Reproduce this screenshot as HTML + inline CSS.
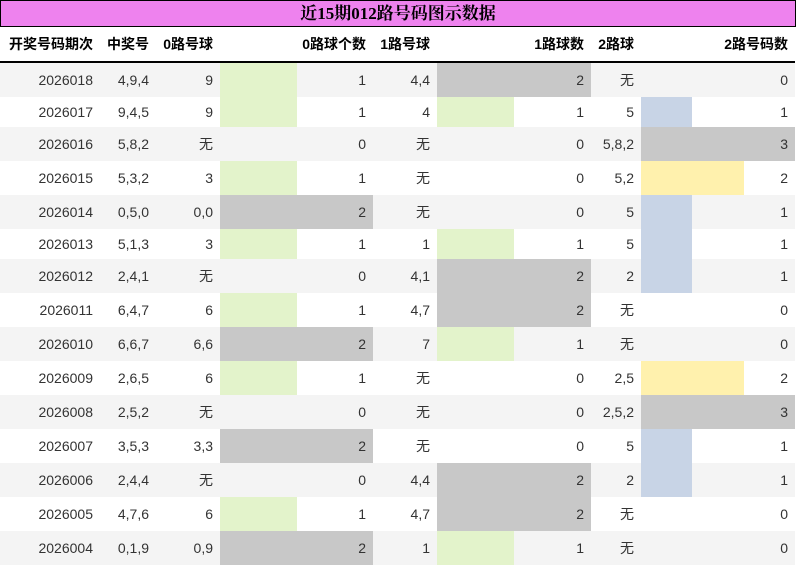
<!DOCTYPE html>
<html><head><meta charset="utf-8"><style>
body{margin:0;width:796px;height:566px;background:#fff;font-family:"Liberation Sans","Noto Sans CJK SC",sans-serif;overflow:hidden}
.title{position:absolute;left:0;top:0;width:794px;height:25px;background:#ee82ee;border:1px solid #000;text-align:center;font:bold 17px/25px "Liberation Serif","Noto Serif CJK SC",serif;color:#000}
table{position:absolute;left:0;top:27px;border-collapse:collapse;table-layout:fixed;width:795px}
td,th{padding:0 7px 0 0;text-align:right;font-size:14px;white-space:nowrap}
th{height:34px;font-weight:bold;color:#000;border-bottom:2px solid #000}
td{color:#333;height:34px}
tr.s td{height:30px}
tr.g td{background:#f4f4f4}
td.b{position:relative;padding:0}
td.b div{position:absolute;left:0;top:0;bottom:0}
td.b span{position:relative;display:block;padding-right:7px}
.G{background:#e3f3cb}.K{background:#c8c8c8}.B{background:#c8d4e6}.Y{background:#fff1ad}
</style></head><body>
<div class="title">近15期012路号码图示数据</div>
<table>
<colgroup><col style="width:100px"><col style="width:56px"><col style="width:64px"><col style="width:153px"><col style="width:64px"><col style="width:154px"><col style="width:50px"><col style="width:154px"></colgroup>
<tr><th>开奖号码期次</th><th>中奖号</th><th>0路号球</th><th>0路球个数</th><th>1路号球</th><th>1路球数</th><th>2路球</th><th>2路号码数</th></tr>
<tr class="g"><td>2026018</td><td>4,9,4</td><td>9</td><td class="b"><div class="G" style="width:50%"></div><span>1</span></td><td>4,4</td><td class="b"><div class="K" style="width:100%"></div><span>2</span></td><td>无</td><td class="b"><span>0</span></td></tr>
<tr class="s"><td>2026017</td><td>9,4,5</td><td>9</td><td class="b"><div class="G" style="width:50%"></div><span>1</span></td><td>4</td><td class="b"><div class="G" style="width:50%"></div><span>1</span></td><td>5</td><td class="b"><div class="B" style="width:33.3%"></div><span>1</span></td></tr>
<tr class="g"><td>2026016</td><td>5,8,2</td><td>无</td><td class="b"><span>0</span></td><td>无</td><td class="b"><span>0</span></td><td>5,8,2</td><td class="b"><div class="K" style="width:100%"></div><span>3</span></td></tr>
<tr><td>2026015</td><td>5,3,2</td><td>3</td><td class="b"><div class="G" style="width:50%"></div><span>1</span></td><td>无</td><td class="b"><span>0</span></td><td>5,2</td><td class="b"><div class="Y" style="width:66.6%"></div><span>2</span></td></tr>
<tr class="g"><td>2026014</td><td>0,5,0</td><td>0,0</td><td class="b"><div class="K" style="width:100%"></div><span>2</span></td><td>无</td><td class="b"><span>0</span></td><td>5</td><td class="b"><div class="B" style="width:33.3%"></div><span>1</span></td></tr>
<tr class="s"><td>2026013</td><td>5,1,3</td><td>3</td><td class="b"><div class="G" style="width:50%"></div><span>1</span></td><td>1</td><td class="b"><div class="G" style="width:50%"></div><span>1</span></td><td>5</td><td class="b"><div class="B" style="width:33.3%"></div><span>1</span></td></tr>
<tr class="g"><td>2026012</td><td>2,4,1</td><td>无</td><td class="b"><span>0</span></td><td>4,1</td><td class="b"><div class="K" style="width:100%"></div><span>2</span></td><td>2</td><td class="b"><div class="B" style="width:33.3%"></div><span>1</span></td></tr>
<tr><td>2026011</td><td>6,4,7</td><td>6</td><td class="b"><div class="G" style="width:50%"></div><span>1</span></td><td>4,7</td><td class="b"><div class="K" style="width:100%"></div><span>2</span></td><td>无</td><td class="b"><span>0</span></td></tr>
<tr class="g"><td>2026010</td><td>6,6,7</td><td>6,6</td><td class="b"><div class="K" style="width:100%"></div><span>2</span></td><td>7</td><td class="b"><div class="G" style="width:50%"></div><span>1</span></td><td>无</td><td class="b"><span>0</span></td></tr>
<tr><td>2026009</td><td>2,6,5</td><td>6</td><td class="b"><div class="G" style="width:50%"></div><span>1</span></td><td>无</td><td class="b"><span>0</span></td><td>2,5</td><td class="b"><div class="Y" style="width:66.6%"></div><span>2</span></td></tr>
<tr class="g"><td>2026008</td><td>2,5,2</td><td>无</td><td class="b"><span>0</span></td><td>无</td><td class="b"><span>0</span></td><td>2,5,2</td><td class="b"><div class="K" style="width:100%"></div><span>3</span></td></tr>
<tr><td>2026007</td><td>3,5,3</td><td>3,3</td><td class="b"><div class="K" style="width:100%"></div><span>2</span></td><td>无</td><td class="b"><span>0</span></td><td>5</td><td class="b"><div class="B" style="width:33.3%"></div><span>1</span></td></tr>
<tr class="g"><td>2026006</td><td>2,4,4</td><td>无</td><td class="b"><span>0</span></td><td>4,4</td><td class="b"><div class="K" style="width:100%"></div><span>2</span></td><td>2</td><td class="b"><div class="B" style="width:33.3%"></div><span>1</span></td></tr>
<tr><td>2026005</td><td>4,7,6</td><td>6</td><td class="b"><div class="G" style="width:50%"></div><span>1</span></td><td>4,7</td><td class="b"><div class="K" style="width:100%"></div><span>2</span></td><td>无</td><td class="b"><span>0</span></td></tr>
<tr class="g"><td>2026004</td><td>0,1,9</td><td>0,9</td><td class="b"><div class="K" style="width:100%"></div><span>2</span></td><td>1</td><td class="b"><div class="G" style="width:50%"></div><span>1</span></td><td>无</td><td class="b"><span>0</span></td></tr>
</table>
</body></html>
